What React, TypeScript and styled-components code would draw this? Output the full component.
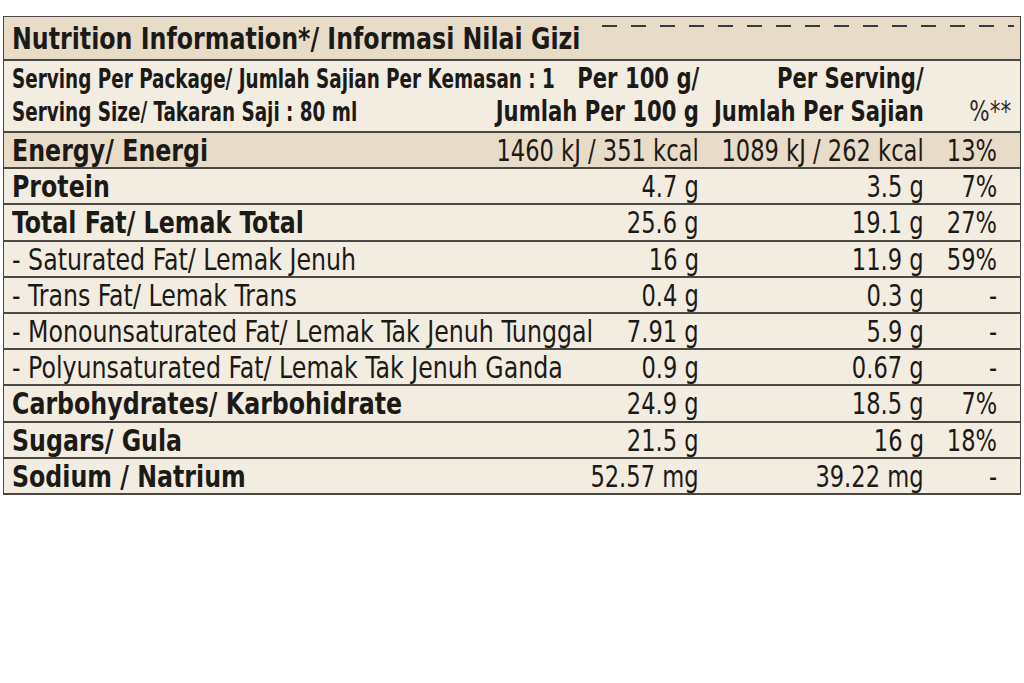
import styled, { createGlobalStyle } from 'styled-components'

type Row = {
  label: string
  per100: string
  serving: string
  pct: string
  bold?: boolean
  shaded?: boolean
}

const rows: Row[] = [
  { label: 'Energy/ Energi', per100: '1460 kJ / 351 kcal', serving: '1089 kJ / 262 kcal', pct: '13%', bold: true, shaded: true },
  { label: 'Protein', per100: '4.7 g', serving: '3.5 g', pct: '7%', bold: true },
  { label: 'Total Fat/ Lemak Total', per100: '25.6 g', serving: '19.1 g', pct: '27%', bold: true },
  { label: '- Saturated Fat/ Lemak Jenuh', per100: '16 g', serving: '11.9 g', pct: '59%' },
  { label: '- Trans Fat/ Lemak Trans', per100: '0.4 g', serving: '0.3 g', pct: '-' },
  { label: '- Monounsaturated Fat/ Lemak Tak Jenuh Tunggal', per100: '7.91 g', serving: '5.9 g', pct: '-' },
  { label: '- Polyunsaturated Fat/ Lemak Tak Jenuh Ganda', per100: '0.9 g', serving: '0.67 g', pct: '-' },
  { label: 'Carbohydrates/ Karbohidrate', per100: '24.9 g', serving: '18.5 g', pct: '7%', bold: true },
  { label: 'Sugars/ Gula', per100: '21.5 g', serving: '16 g', pct: '18%', bold: true },
  { label: 'Sodium / Natrium', per100: '52.57 mg', serving: '39.22 mg', pct: '-', bold: true },
]

export default function App() {
  return (
    <>
      <GlobalStyle />
      <Page>
        <Table>
          <TitleRow>
            <Title>
              <Squeeze $scale={0.85}>Nutrition Information*/ Informasi Nilai Gizi</Squeeze>
            </Title>
            <Dashes />
          </TitleRow>

          <HeaderRow>
            <HeaderLine>
              <ServingText>
                <Squeeze $scale={0.786}>Serving Per Package/ Jumlah Sajian Per Kemasan : 1</Squeeze>
              </ServingText>
              <HeadCell>
                <Squeeze $scale={0.84} $right>Per 100 g/</Squeeze>
              </HeadCell>
              <HeadCell>
                <Squeeze $scale={0.84} $right>Per Serving/</Squeeze>
              </HeadCell>
              <HeadCell />
            </HeaderLine>
            <HeaderLine>
              <ServingText>
                <Squeeze $scale={0.786}>Serving Size/ Takaran Saji : 80 ml</Squeeze>
              </ServingText>
              <HeadCell>
                <Squeeze $scale={0.84} $right>Jumlah Per 100 g</Squeeze>
              </HeadCell>
              <HeadCell>
                <Squeeze $scale={0.84} $right>Jumlah Per Sajian</Squeeze>
              </HeadCell>
              <PctHead>
                <Squeeze $scale={0.85} $right>%**</Squeeze>
              </PctHead>
            </HeaderLine>
          </HeaderRow>

          {rows.map((r) => (
            <DataRow key={r.label} $shaded={r.shaded}>
              <Label $bold={r.bold}>
                <Squeeze $scale={0.85}>{r.label}</Squeeze>
              </Label>
              <Value>
                <Squeeze $scale={0.81} $right>{r.per100}</Squeeze>
              </Value>
              <Value>
                <Squeeze $scale={0.81} $right>{r.serving}</Squeeze>
              </Value>
              <Value>
                <Squeeze $scale={0.81} $right>{r.pct}</Squeeze>
              </Value>
            </DataRow>
          ))}
        </Table>
      </Page>
    </>
  )
}

const GlobalStyle = createGlobalStyle`
  html, body {
    margin: 0;
    background: #ffffff;
  }
  body {
    font-family: "DejaVu Sans Condensed", "DejaVu Sans", sans-serif;
    color: #1c1a17;
  }
`

const Page = styled.div`
  width: 1024px;
  height: 683px;
  padding: 16px 3px 0;
  box-sizing: border-box;
`

const Table = styled.div`
  display: flex;
  flex-direction: column;
  border: 1px solid #4a4744;
  border-bottom: none;
  background: #f2ece1;
`

const grid = `
  display: grid;
  grid-template-columns: minmax(0, 1fr) 120px 225px 73px;
  padding: 0 23px 0 8px;
  align-items: center;
`

const Squeeze = styled.span<{ $scale: number; $right?: boolean }>`
  display: inline-block;
  white-space: nowrap;
  transform: scaleX(${({ $scale }) => $scale});
  transform-origin: ${({ $right }) => ($right ? 'right' : 'left')} center;
`

const TitleRow = styled.div`
  display: grid;
  grid-template-columns: 590px 1fr;
  align-items: center;
  height: 42px;
  padding: 0 6px 0 8px;
  box-sizing: content-box;
  background: #e8dbc7;
  border-bottom: 2px solid #4a4744;
`

const Title = styled.div`
  font-size: 31px;
  font-weight: 700;
  line-height: 42px;
  min-width: 0;
`

const Dashes = styled.div`
  align-self: start;
  margin-top: 8px;
  height: 2px;
  background: repeating-linear-gradient(
    90deg,
    #3a3734 0 15px,
    transparent 15px 29px
  );
`

const HeaderRow = styled.div`
  display: flex;
  flex-direction: column;
  height: 69px;
  padding-top: 1px;
  border-bottom: 2px solid #4a4744;
`

const HeaderLine = styled.div`
  ${grid}
  height: 33px;
`

const ServingText = styled.div`
  font-size: 26px;
  font-weight: 700;
  min-width: 0;
`

const HeadCell = styled.div`
  display: flex;
  justify-content: flex-end;
  font-size: 28px;
  font-weight: 700;
`

const PctHead = styled.div`
  display: flex;
  justify-content: flex-end;
  margin-right: -14px;
  font-size: 28px;
  color: #2e2b28;
`

const DataRow = styled.div<{ $shaded?: boolean }>`
  ${grid}
  box-sizing: border-box;
  height: 36.2px;
  line-height: 34px;
  background: ${({ $shaded }) => ($shaded ? '#e8dbc7' : '#f2ece1')};
  border-bottom: 2px solid #4a4744;
`

const Label = styled.div<{ $bold?: boolean }>`
  font-size: 31px;
  font-weight: ${({ $bold }) => ($bold ? 700 : 400)};
  min-width: 0;
`

const Value = styled.div`
  display: flex;
  justify-content: flex-end;
  font-size: 31px;
`
